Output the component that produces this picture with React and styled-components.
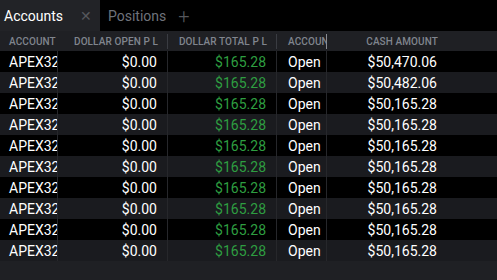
import React from "react";
import styled, { createGlobalStyle } from "styled-components";

const GlobalStyle = createGlobalStyle`
  html, body {
    margin: 0;
    padding: 0;
    background: #1f2024;
  }
  body {
    font-family: Roboto, "Liberation Sans", sans-serif;
    overflow: hidden;
  }
`;

const Page = styled.div`
  width: 497px;
  height: 280px;
  background: #1f2024;
  display: flex;
  flex-direction: column;
`;

const TabBar = styled.div`
  display: flex;
  align-items: stretch;
  height: 31px;
  background: #000;
`;

const Tab = styled.div`
  display: flex;
  align-items: center;
  padding: ${props => (props.active ? "0 8px 0 4px" : "0 0 0 8px")};
  width: ${props => (props.active ? "100px" : "auto")};
  box-sizing: border-box;
  background: ${props => (props.active ? "#222327" : "transparent")};
  color: ${props => (props.active ? "#ffffff" : "#6f737b")};
  font-size: 14px;
`;

const Close = styled.span`
  color: #55575c;
  font-size: 14px;
  margin-left: auto;
`;

const Add = styled.span`
  display: flex;
  align-items: center;
  padding-left: 12px;
  color: #55575c;
  font-size: 20px;
  font-weight: 300;
`;

const Grid = styled.div`
  display: grid;
  grid-template-columns: 58px 110px 109px 50px 121px;
`;

const HeaderRow = styled(Grid)`
  height: 20px;
  background: #1f2024;
`;

const HeadCell = styled.div`
  position: relative;
  display: flex;
  align-items: center;
  justify-content: ${props => (props.right ? "flex-end" : "flex-start")};
  padding: ${props => (props.right ? "0 10px 0 0" : `0 0 0 ${props.indent || 9}px`)};
  overflow: hidden;
  white-space: nowrap;
  color: #80858e;
  font-size: 10px;
  font-weight: 500;
  letter-spacing: 0.1px;
  box-sizing: border-box;
`;

const Divider = styled.span`
  position: absolute;
  right: 0;
  top: 3px;
  bottom: 2px;
  width: 1px;
  background: ${props => (props.light ? "#8a8d93" : "#3a3c42")};
`;

const Row = styled(Grid)`
  height: 21px;
  background: ${props => (props.alt ? "#1a1b1f" : "#000")};
`;

const Cell = styled.div`
  display: flex;
  align-items: center;
  justify-content: ${props => (props.right ? "flex-end" : "flex-start")};
  padding: ${props => (props.right ? "0 10px 0 0" : `0 0 0 ${props.indent || 10}px`)};
  overflow: hidden;
  white-space: nowrap;
  font-size: 14px;
  color: ${props => (props.green ? "#2e9e41" : "#ffffff")};
  border-right: 1px solid ${props => (props.last ? "transparent" : "#26272b")};
  box-sizing: border-box;
`;

const rows = [
  "$50,470.06",
  "$50,482.06",
  "$50,165.28",
  "$50,165.28",
  "$50,165.28",
  "$50,165.28",
  "$50,165.28",
  "$50,165.28",
  "$50,165.28",
  "$50,165.28",
];

export default function App() {
  return (
    <Page>
      <GlobalStyle />
      <TabBar>
        <Tab active>
          Accounts
          <Close>✕</Close>
        </Tab>
        <Tab>Positions</Tab>
        <Add>+</Add>
      </TabBar>
      <HeaderRow>
        <HeadCell>ACCOUNT</HeadCell>
        <HeadCell right>
          DOLLAR OPEN P L
          <Divider />
        </HeadCell>
        <HeadCell right>
          DOLLAR TOTAL P L
          <Divider />
        </HeadCell>
        <HeadCell indent={11}>
          ACCOUN
          <Divider light />
        </HeadCell>
        <HeadCell right>CASH AMOUNT</HeadCell>
      </HeaderRow>
      {rows.map((cash, i) => (
        <Row key={i} alt={i % 2 === 1}>
          <Cell indent={9}>APEX32</Cell>
          <Cell right>$0.00</Cell>
          <Cell right green>
            $165.28
          </Cell>
          <Cell indent={11}>Open</Cell>
          <Cell right last>
            {cash}
          </Cell>
        </Row>
      ))}
    </Page>
  );
}
